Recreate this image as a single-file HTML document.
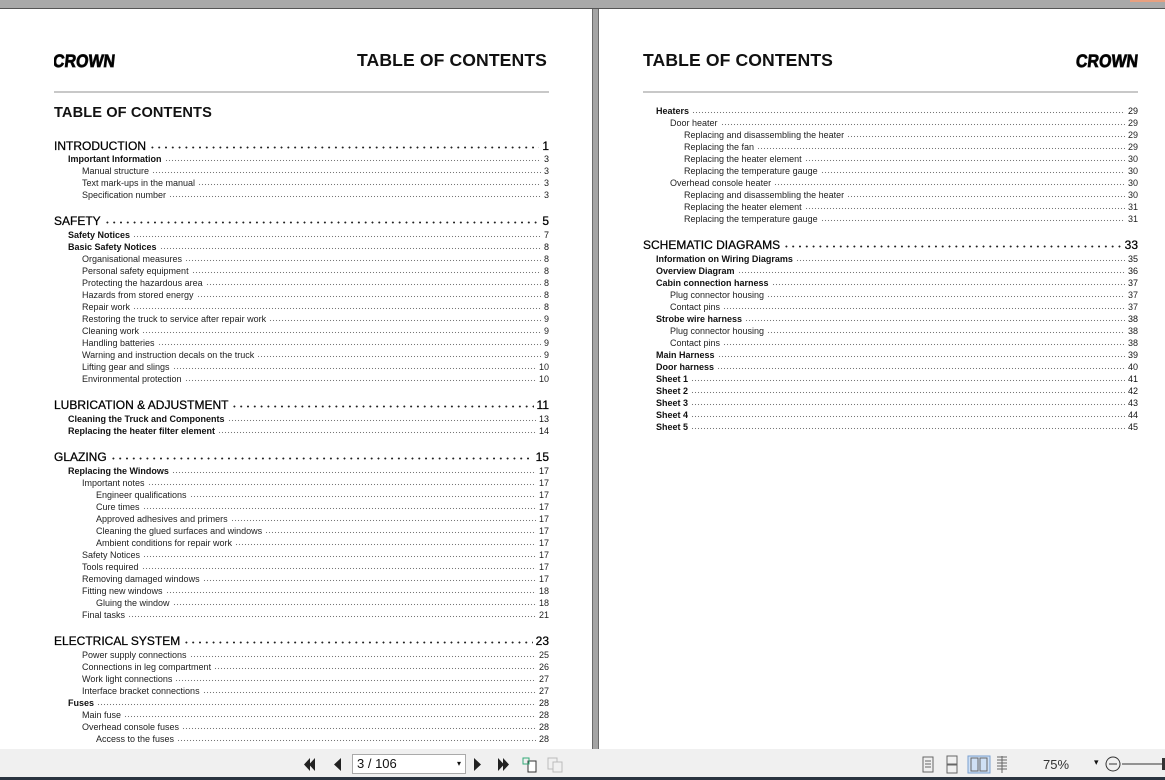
<!DOCTYPE html>
<html><head><meta charset="utf-8">
<style>
*{margin:0;padding:0;box-sizing:border-box}
body{width:1165px;height:780px;overflow:hidden;background:#a8a8a8;font-family:"Liberation Sans",Arial,sans-serif;color:#111;position:relative}
.top{position:absolute;left:0;top:0;width:1165px;height:9px;background:#a9a9a9;border-bottom:1px solid #555}
.orange{position:absolute;right:0;top:0;width:35px;height:2px;background:#e8a080}
.page{position:absolute;top:9px;height:740px;background:#fff}
#p1{left:0;width:592px}
#p2{left:599px;width:566px}
.gap{position:absolute;left:592px;top:9px;width:7px;height:740px;background:#a4a4a4;border-left:1px solid #6a6a6a;border-right:1px solid #6a6a6a}
.hdr{position:absolute;font-weight:bold;font-size:17.6px;letter-spacing:0.1px}
.rule{position:absolute;height:2px;background:#c8c8c8}
.r{position:absolute;height:12px;line-height:12px;font-size:9px;display:flex;white-space:nowrap;color:#222}
.r .d{flex:1;margin:0 3px;height:9px;background-image:radial-gradient(circle,#777 0.55px,transparent 0.8px);background-size:3px 3px;background-position:0 100%;background-repeat:repeat-x}
.r.b{color:#111}
.r.b span:first-child{font-weight:bold}
.r.h{font-size:12px;height:14px;line-height:14px;color:#000;-webkit-text-stroke:0.25px #000}
.r.h .d{height:10px;background-image:radial-gradient(circle,#222 0.8px,transparent 1.1px);background-size:6.8px 3px}
.tb{position:absolute;left:0;top:749px;width:1165px;height:31px;background:#f0f0f0;border-bottom:3px solid #2a3440}
.pg{position:absolute;left:352px;top:5px;width:114px;height:20px;border:1px solid #aaa;background:#fff;font-size:13px;line-height:18px;padding-left:4px}
</style></head><body>
<div class="top"><div class="orange"></div></div>
<div class="gap"></div>
<div class="page" id="p1"></div>
<div class="page" id="p2"></div>

<svg style="position:absolute;left:54px;top:52px" width="64" height="16"><text x="0" y="15" font-family="Liberation Sans" font-weight="bold" font-size="18" textLength="62" lengthAdjust="spacingAndGlyphs" stroke="#111" stroke-width="0.8" transform="skewX(-6)">CROWN</text></svg>
<div class="hdr" style="left:357px;top:50px">TABLE OF CONTENTS</div>
<div class="rule" style="left:54px;top:91px;width:495px"></div>
<div class="hdr" style="left:54px;top:105px;font-size:14.6px">TABLE OF CONTENTS</div>

<div class="hdr" style="left:643px;top:50px">TABLE OF CONTENTS</div>
<svg style="position:absolute;left:1075px;top:52px" width="66" height="16"><text x="2" y="15" font-family="Liberation Sans" font-weight="bold" font-size="18" textLength="62" lengthAdjust="spacingAndGlyphs" stroke="#111" stroke-width="0.8" transform="skewX(-6)">CROWN</text></svg>
<div class="rule" style="left:643px;top:91px;width:495px"></div>

<!-- left page rows -->
<div class="r h" style="left:54px;width:495px;top:139px"><span>INTRODUCTION</span><span class="d"></span><span>1</span></div>
<div class="r b" style="left:68px;width:481px;top:153px"><span>Important Information</span><span class="d"></span><span>3</span></div>
<div class="r" style="left:82px;width:467px;top:165px"><span>Manual structure</span><span class="d"></span><span>3</span></div>
<div class="r" style="left:82px;width:467px;top:177px"><span>Text mark-ups in the manual</span><span class="d"></span><span>3</span></div>
<div class="r" style="left:82px;width:467px;top:189px"><span>Specification number</span><span class="d"></span><span>3</span></div>

<div class="r h" style="left:54px;width:495px;top:214px"><span>SAFETY</span><span class="d"></span><span>5</span></div>
<div class="r b" style="left:68px;width:481px;top:229px"><span>Safety Notices</span><span class="d"></span><span>7</span></div>
<div class="r b" style="left:68px;width:481px;top:241px"><span>Basic Safety Notices</span><span class="d"></span><span>8</span></div>
<div class="r" style="left:82px;width:467px;top:253px"><span>Organisational measures</span><span class="d"></span><span>8</span></div>
<div class="r" style="left:82px;width:467px;top:265px"><span>Personal safety equipment</span><span class="d"></span><span>8</span></div>
<div class="r" style="left:82px;width:467px;top:277px"><span>Protecting the hazardous area</span><span class="d"></span><span>8</span></div>
<div class="r" style="left:82px;width:467px;top:289px"><span>Hazards from stored energy</span><span class="d"></span><span>8</span></div>
<div class="r" style="left:82px;width:467px;top:301px"><span>Repair work</span><span class="d"></span><span>8</span></div>
<div class="r" style="left:82px;width:467px;top:313px"><span>Restoring the truck to service after repair work</span><span class="d"></span><span>9</span></div>
<div class="r" style="left:82px;width:467px;top:325px"><span>Cleaning work</span><span class="d"></span><span>9</span></div>
<div class="r" style="left:82px;width:467px;top:337px"><span>Handling batteries</span><span class="d"></span><span>9</span></div>
<div class="r" style="left:82px;width:467px;top:349px"><span>Warning and instruction decals on the truck</span><span class="d"></span><span>9</span></div>
<div class="r" style="left:82px;width:467px;top:361px"><span>Lifting gear and slings</span><span class="d"></span><span>10</span></div>
<div class="r" style="left:82px;width:467px;top:373px"><span>Environmental protection</span><span class="d"></span><span>10</span></div>

<div class="r h" style="left:54px;width:495px;top:398px"><span>LUBRICATION &amp; ADJUSTMENT</span><span class="d"></span><span>11</span></div>
<div class="r b" style="left:68px;width:481px;top:413px"><span>Cleaning the Truck and Components</span><span class="d"></span><span>13</span></div>
<div class="r b" style="left:68px;width:481px;top:425px"><span>Replacing the heater filter element</span><span class="d"></span><span>14</span></div>

<div class="r h" style="left:54px;width:495px;top:450px"><span>GLAZING</span><span class="d"></span><span>15</span></div>
<div class="r b" style="left:68px;width:481px;top:465px"><span>Replacing the Windows</span><span class="d"></span><span>17</span></div>
<div class="r" style="left:82px;width:467px;top:477px"><span>Important notes</span><span class="d"></span><span>17</span></div>
<div class="r" style="left:96px;width:453px;top:489px"><span>Engineer qualifications</span><span class="d"></span><span>17</span></div>
<div class="r" style="left:96px;width:453px;top:501px"><span>Cure times</span><span class="d"></span><span>17</span></div>
<div class="r" style="left:96px;width:453px;top:513px"><span>Approved adhesives and primers</span><span class="d"></span><span>17</span></div>
<div class="r" style="left:96px;width:453px;top:525px"><span>Cleaning the glued surfaces and windows</span><span class="d"></span><span>17</span></div>
<div class="r" style="left:96px;width:453px;top:537px"><span>Ambient conditions for repair work</span><span class="d"></span><span>17</span></div>
<div class="r" style="left:82px;width:467px;top:549px"><span>Safety Notices</span><span class="d"></span><span>17</span></div>
<div class="r" style="left:82px;width:467px;top:561px"><span>Tools required</span><span class="d"></span><span>17</span></div>
<div class="r" style="left:82px;width:467px;top:573px"><span>Removing damaged windows</span><span class="d"></span><span>17</span></div>
<div class="r" style="left:82px;width:467px;top:585px"><span>Fitting new windows</span><span class="d"></span><span>18</span></div>
<div class="r" style="left:96px;width:453px;top:597px"><span>Gluing the window</span><span class="d"></span><span>18</span></div>
<div class="r" style="left:82px;width:467px;top:609px"><span>Final tasks</span><span class="d"></span><span>21</span></div>

<div class="r h" style="left:54px;width:495px;top:634px"><span>ELECTRICAL SYSTEM</span><span class="d"></span><span>23</span></div>
<div class="r" style="left:82px;width:467px;top:649px"><span>Power supply connections</span><span class="d"></span><span>25</span></div>
<div class="r" style="left:82px;width:467px;top:661px"><span>Connections in leg compartment</span><span class="d"></span><span>26</span></div>
<div class="r" style="left:82px;width:467px;top:673px"><span>Work light connections</span><span class="d"></span><span>27</span></div>
<div class="r" style="left:82px;width:467px;top:685px"><span>Interface bracket connections</span><span class="d"></span><span>27</span></div>
<div class="r b" style="left:68px;width:481px;top:697px"><span>Fuses</span><span class="d"></span><span>28</span></div>
<div class="r" style="left:82px;width:467px;top:709px"><span>Main fuse</span><span class="d"></span><span>28</span></div>
<div class="r" style="left:82px;width:467px;top:721px"><span>Overhead console fuses</span><span class="d"></span><span>28</span></div>
<div class="r" style="left:96px;width:453px;top:733px"><span>Access to the fuses</span><span class="d"></span><span>28</span></div>

<!-- right page -->
<div class="r b" style="left:656px;width:482px;top:105px"><span>Heaters</span><span class="d"></span><span>29</span></div>
<div class="r" style="left:670px;width:468px;top:117px"><span>Door heater</span><span class="d"></span><span>29</span></div>
<div class="r" style="left:684px;width:454px;top:129px"><span>Replacing and disassembling the heater</span><span class="d"></span><span>29</span></div>
<div class="r" style="left:684px;width:454px;top:141px"><span>Replacing the fan</span><span class="d"></span><span>29</span></div>
<div class="r" style="left:684px;width:454px;top:153px"><span>Replacing the heater element</span><span class="d"></span><span>30</span></div>
<div class="r" style="left:684px;width:454px;top:165px"><span>Replacing the temperature gauge</span><span class="d"></span><span>30</span></div>
<div class="r" style="left:670px;width:468px;top:177px"><span>Overhead console heater</span><span class="d"></span><span>30</span></div>
<div class="r" style="left:684px;width:454px;top:189px"><span>Replacing and disassembling the heater</span><span class="d"></span><span>30</span></div>
<div class="r" style="left:684px;width:454px;top:201px"><span>Replacing the heater element</span><span class="d"></span><span>31</span></div>
<div class="r" style="left:684px;width:454px;top:213px"><span>Replacing the temperature gauge</span><span class="d"></span><span>31</span></div>

<div class="r h" style="left:643px;width:495px;top:238px"><span>SCHEMATIC DIAGRAMS</span><span class="d"></span><span>33</span></div>
<div class="r b" style="left:656px;width:482px;top:253px"><span>Information on Wiring Diagrams</span><span class="d"></span><span>35</span></div>
<div class="r b" style="left:656px;width:482px;top:265px"><span>Overview Diagram</span><span class="d"></span><span>36</span></div>
<div class="r b" style="left:656px;width:482px;top:277px"><span>Cabin connection harness</span><span class="d"></span><span>37</span></div>
<div class="r" style="left:670px;width:468px;top:289px"><span>Plug connector housing</span><span class="d"></span><span>37</span></div>
<div class="r" style="left:670px;width:468px;top:301px"><span>Contact pins</span><span class="d"></span><span>37</span></div>
<div class="r b" style="left:656px;width:482px;top:313px"><span>Strobe wire harness</span><span class="d"></span><span>38</span></div>
<div class="r" style="left:670px;width:468px;top:325px"><span>Plug connector housing</span><span class="d"></span><span>38</span></div>
<div class="r" style="left:670px;width:468px;top:337px"><span>Contact pins</span><span class="d"></span><span>38</span></div>
<div class="r b" style="left:656px;width:482px;top:349px"><span>Main Harness</span><span class="d"></span><span>39</span></div>
<div class="r b" style="left:656px;width:482px;top:361px"><span>Door harness</span><span class="d"></span><span>40</span></div>
<div class="r b" style="left:656px;width:482px;top:373px"><span>Sheet 1</span><span class="d"></span><span>41</span></div>
<div class="r b" style="left:656px;width:482px;top:385px"><span>Sheet 2</span><span class="d"></span><span>42</span></div>
<div class="r b" style="left:656px;width:482px;top:397px"><span>Sheet 3</span><span class="d"></span><span>43</span></div>
<div class="r b" style="left:656px;width:482px;top:409px"><span>Sheet 4</span><span class="d"></span><span>44</span></div>
<div class="r b" style="left:656px;width:482px;top:421px"><span>Sheet 5</span><span class="d"></span><span>45</span></div>

<div class="tb">
<svg style="position:absolute;left:304px;top:8px" width="240" height="16">
<g fill="#222">
<path d="M6 1 L0 7.5 L6 14Z"/><path d="M11 1 L5 7.5 L11 14Z"/>
<path d="M37 1 L30 7.5 L37 14Z"/>
<path d="M170 1 L177 7.5 L170 14Z"/>
<path d="M194 1 L200 7.5 L194 14Z"/><path d="M199 1 L205 7.5 L199 14Z"/>
</g>
<g fill="none" stroke="#333"><rect x="224" y="4" width="8" height="11" fill="#fff"/><rect x="219" y="1" width="6" height="6" stroke="#3a7"/></g>
</svg>
<div class="pg">3 / 106<span style="position:absolute;right:4px;top:0;font-size:8px">▾</span></div>
<svg style="position:absolute;left:546px;top:8px" width="20" height="16"><g fill="none" stroke="#bbb"><rect x="2" y="1" width="9" height="11"/><rect x="7" y="5" width="9" height="10" fill="#f0f0f0"/></g></svg>
<svg style="position:absolute;left:920px;top:6px" width="100" height="20"><g fill="none" stroke="#666">
<rect x="3" y="2" width="10" height="15"/><path d="M5 6h6M5 9h6M5 12h6"/>
<rect x="27" y="1" width="10" height="8"/><rect x="27" y="10" width="10" height="8"/>
<rect x="48" y="1" width="22" height="17" fill="#cfe0f5" stroke="#7aa0d0"/><rect x="51" y="3" width="7" height="13"/><rect x="60" y="3" width="7" height="13"/>
<path d="M77 2h10M77 5h10M77 8h10M77 11h10M77 14h10M82 1v17"/></g></svg>
<div style="position:absolute;left:1043px;top:8px;font-size:13px;color:#333">75%</div>
<div style="position:absolute;left:1094px;top:8px;font-size:9px">▾</div>
<svg style="position:absolute;left:1104px;top:6px" width="61" height="20"><circle cx="9" cy="9" r="7" fill="none" stroke="#333"/><path d="M5 9h8M18 9h43" stroke="#333"/><rect x="58" y="3" width="3" height="12" fill="#333"/></svg>
</div>
</body></html>
